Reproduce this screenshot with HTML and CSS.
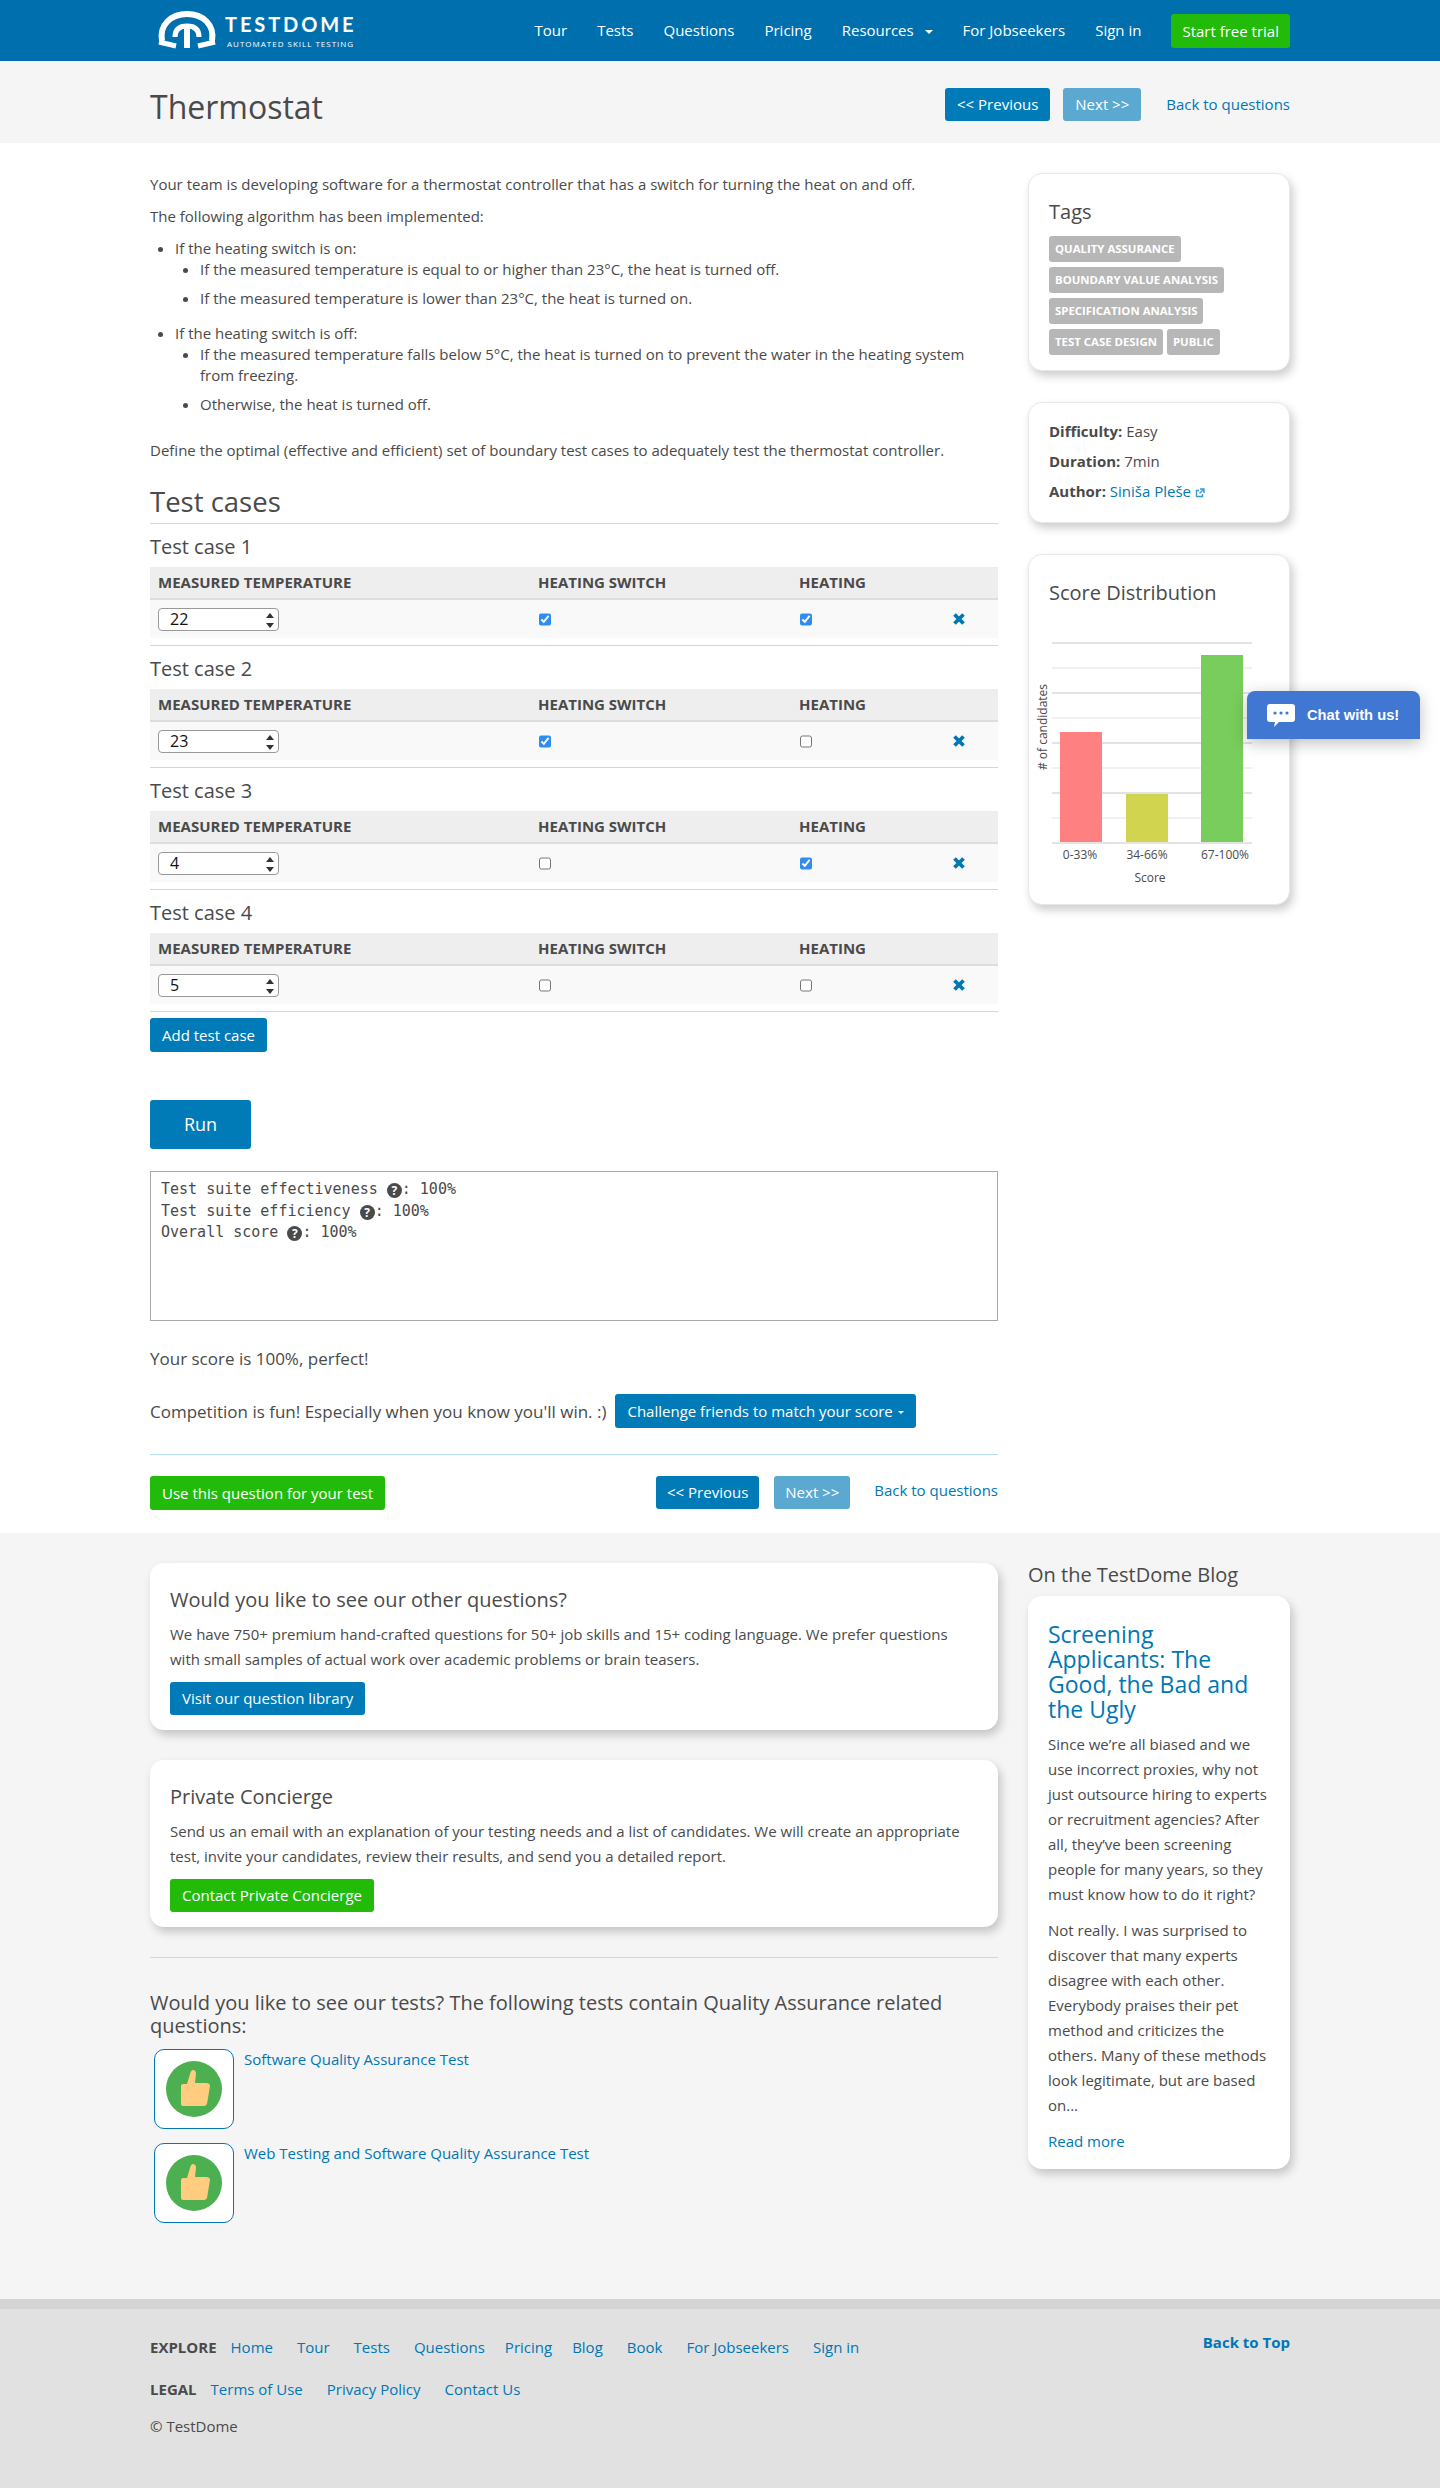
FILE: index.html
```html
<!DOCTYPE html>
<html lang="en">
<head>
    <meta charset="UTF-8">
    <meta name="viewport" content="width=device-width, initial-scale=1.0">
    <title>Thermostat - TestDome</title>
    <link rel="stylesheet" href="styles.css">
</head>
<body>

    <header class="topbar">
        <div class="container topbar-inner">
            <a class="logo" href="#">
                <svg class="logo-mark" viewBox="0 0 64 44" width="64" height="44">
                    <path d="M6 33C3 17 15 6 31 6C47 6 59 17 56 33" fill="none" stroke="#fff" stroke-width="6"/>
                    <path d="M3 34L20 38M59 34L42 38" fill="none" stroke="#fff" stroke-width="5"/>
                    <path d="M19 29C19 21 24 18 31 18C38 18 43 21 43 29" fill="none" stroke="#fff" stroke-width="5"/>
                    <path d="M28 20H34V40H28Z" fill="#fff"/>
                </svg>
                <span class="logo-text">
                    <span class="logo-name">TESTDOME</span>
                    <span class="logo-tag">AUTOMATED SKILL TESTING</span>
                </span>
            </a>
            <nav class="topnav">
                <a href="#">Tour</a>
                <a href="#">Tests</a>
                <a href="#">Questions</a>
                <a href="#">Pricing</a>
                <a href="#" class="has-caret">Resources <span class="caret"></span></a>
                <a href="#">For Jobseekers</a>
                <a href="#">Sign in</a>
                <a href="#" class="btn btn-green">Start free trial</a>
            </nav>
        </div>
    </header>

    <div class="titlebar">
        <div class="container titlebar-inner">
            <h1>Thermostat</h1>
            <div class="pager">
                <a href="#" class="btn btn-blue">&lt;&lt; Previous</a>
                <a href="#" class="btn btn-faded">Next &gt;&gt;</a>
                <a href="#" class="back-link">Back to questions</a>
            </div>
        </div>
    </div>

    <div class="container layout">
        <main class="question">
            <p>Your team is developing software for a thermostat controller that has a switch for turning the heat on and off.</p>
            <p>The following algorithm has been implemented:</p>
            <ul class="rules">
                <li>If the heating switch is on:
                    <ul>
                        <li>If the measured temperature is equal to or higher than 23°C, the heat is turned off.</li>
                        <li>If the measured temperature is lower than 23°C, the heat is turned on.</li>
                    </ul>
                </li>
                <li>If the heating switch is off:
                    <ul>
                        <li>If the measured temperature falls below 5°C, the heat is turned on to prevent the water in the heating system from freezing.</li>
                        <li>Otherwise, the heat is turned off.</li>
                    </ul>
                </li>
            </ul>
            <p>Define the optimal (effective and efficient) set of boundary test cases to adequately test the thermostat controller.</p>

            <h2>Test cases</h2>

            <section class="case">
                <h3>Test case 1</h3>
                <table>
                    <thead>
                        <tr><th class="col-temp">Measured temperature</th><th class="col-switch">Heating switch</th><th class="col-heat">Heating</th><th></th></tr>
                    </thead>
                    <tbody>
                        <tr>
                            <td><span class="spin"><input type="text" value="22"><span class="spin-arrows"></span></span></td>
                            <td><input type="checkbox" checked></td>
                            <td><input type="checkbox" checked></td>
                            <td><svg class="remove" viewBox="0 0 12 12" width="12" height="12"><path d="M1.5 1.5L10.5 10.5M10.5 1.5L1.5 10.5"/></svg></td>
                        </tr>
                    </tbody>
                </table>
            </section>

            <section class="case">
                <h3>Test case 2</h3>
                <table>
                    <thead>
                        <tr><th class="col-temp">Measured temperature</th><th class="col-switch">Heating switch</th><th class="col-heat">Heating</th><th></th></tr>
                    </thead>
                    <tbody>
                        <tr>
                            <td><span class="spin"><input type="text" value="23"><span class="spin-arrows"></span></span></td>
                            <td><input type="checkbox" checked></td>
                            <td><input type="checkbox"></td>
                            <td><svg class="remove" viewBox="0 0 12 12" width="12" height="12"><path d="M1.5 1.5L10.5 10.5M10.5 1.5L1.5 10.5"/></svg></td>
                        </tr>
                    </tbody>
                </table>
            </section>

            <section class="case">
                <h3>Test case 3</h3>
                <table>
                    <thead>
                        <tr><th class="col-temp">Measured temperature</th><th class="col-switch">Heating switch</th><th class="col-heat">Heating</th><th></th></tr>
                    </thead>
                    <tbody>
                        <tr>
                            <td><span class="spin"><input type="text" value="4"><span class="spin-arrows"></span></span></td>
                            <td><input type="checkbox"></td>
                            <td><input type="checkbox" checked></td>
                            <td><svg class="remove" viewBox="0 0 12 12" width="12" height="12"><path d="M1.5 1.5L10.5 10.5M10.5 1.5L1.5 10.5"/></svg></td>
                        </tr>
                    </tbody>
                </table>
            </section>

            <section class="case">
                <h3>Test case 4</h3>
                <table>
                    <thead>
                        <tr><th class="col-temp">Measured temperature</th><th class="col-switch">Heating switch</th><th class="col-heat">Heating</th><th></th></tr>
                    </thead>
                    <tbody>
                        <tr>
                            <td><span class="spin"><input type="text" value="5"><span class="spin-arrows"></span></span></td>
                            <td><input type="checkbox"></td>
                            <td><input type="checkbox"></td>
                            <td><svg class="remove" viewBox="0 0 12 12" width="12" height="12"><path d="M1.5 1.5L10.5 10.5M10.5 1.5L1.5 10.5"/></svg></td>
                        </tr>
                    </tbody>
                </table>
            </section>

            <a href="#" class="btn btn-blue add-case">Add test case</a>
            <a href="#" class="btn btn-blue btn-run">Run</a>

            <div class="output">
                <div>Test suite effectiveness <span class="help">?</span>: 100%</div>
                <div>Test suite efficiency <span class="help">?</span>: 100%</div>
                <div>Overall score <span class="help">?</span>: 100%</div>
            </div>

            <p class="score">Your score is 100%, perfect!</p>
            <div class="challenge">
                <span>Competition is fun! Especially when you know you'll win. :)</span>
                <a href="#" class="btn btn-blue">Challenge friends to match your score <span class="caret caret-small"></span></a>
            </div>

            <div class="actions">
                <a href="#" class="btn btn-green">Use this question for your test</a>
                <div class="pager pager-bottom">
                    <a href="#" class="btn btn-blue">&lt;&lt; Previous</a>
                    <a href="#" class="btn btn-faded">Next &gt;&gt;</a>
                    <a href="#" class="back-link">Back to questions</a>
                </div>
            </div>
        </main>

        <aside class="sidebar">
            <div class="card tags-card">
                <h4>Tags</h4>
                <div class="tags">
                    <span class="tag">Quality Assurance</span>
                    <span class="tag">Boundary Value Analysis</span>
                    <span class="tag">Specification Analysis</span>
                    <span class="tag">Test Case Design</span>
                    <span class="tag">Public</span>
                </div>
            </div>
            <div class="card info-card">
                <div><b>Difficulty:</b> Easy</div>
                <div><b>Duration:</b> 7min</div>
                <div><b>Author:</b> <a href="#">Siniša Pleše</a>
                    <svg class="ext" viewBox="0 0 10 10" width="10" height="10"><path d="M7.5 6V8.5H1.5V2.5H4M5 1H9V5M9 1L4.5 5.5" fill="none" stroke="#3a9ad0" stroke-width="1.4"/></svg>
                </div>
            </div>
            <div class="card chart-card">
                <h4>Score Distribution</h4>
                <svg class="chart" viewBox="0 0 260 260" width="260" height="260">
                    <g class="grid">
                        <path class="thick" d="M22 1H222"/>
                        <path d="M22 26H222"/>
                        <path class="thick" d="M22 51H222"/>
                        <path d="M22 76H222"/>
                        <path class="thick" d="M22 101H222"/>
                        <path d="M22 126H222"/>
                        <path class="thick" d="M22 151H222"/>
                        <path d="M22 176H222"/>
                        <path class="thick" d="M22 201H222"/>
                    </g>
                    <rect x="30" y="90" width="42" height="110" fill="#ff8080"/>
                    <rect x="96" y="152" width="42" height="48" fill="#d1d44f"/>
                    <rect x="171" y="13" width="42" height="187" fill="#79cd5c"/>
                    <text x="50" y="217" text-anchor="middle">0-33%</text>
                    <text x="117" y="217" text-anchor="middle">34-66%</text>
                    <text x="195" y="217" text-anchor="middle">67-100%</text>
                    <text x="120" y="240" text-anchor="middle">Score</text>
                    <text transform="translate(17 85) rotate(-90)" text-anchor="middle"># of candidates</text>
                </svg>
            </div>
        </aside>
    </div>

    <div class="more">
        <div class="container layout">
            <div class="more-main">
                <div class="promo">
                    <h3>Would you like to see our other questions?</h3>
                    <p>We have 750+ premium hand-crafted questions for 50+ job skills and 15+ coding language. We prefer questions with small samples of actual work over academic problems or brain teasers.</p>
                    <a href="#" class="btn btn-blue">Visit our question library</a>
                </div>
                <div class="promo">
                    <h3>Private Concierge</h3>
                    <p>Send us an email with an explanation of your testing needs and a list of candidates. We will create an appropriate test, invite your candidates, review their results, and send you a detailed report.</p>
                    <a href="#" class="btn btn-green">Contact Private Concierge</a>
                </div>
                <h3 class="related-title">Would you like to see our tests? The following tests contain Quality Assurance related questions:</h3>
                <div class="related">
                    <div class="thumb"><svg viewBox="0 0 56 56" width="56" height="56"><circle cx="28" cy="28" r="28" fill="#4caf50"/><path d="M15 25q0-2 2-2h4l3-10q1-4 3-4q3 0 3 4l-1 9h11q4 0 4 3l-3 18q-1 2-3 2H17q-2 0-2-2z" fill="#ffcc80"/></svg></div>
                    <a href="#">Software Quality Assurance Test</a>
                </div>
                <div class="related">
                    <div class="thumb"><svg viewBox="0 0 56 56" width="56" height="56"><circle cx="28" cy="28" r="28" fill="#4caf50"/><path d="M15 25q0-2 2-2h4l3-10q1-4 3-4q3 0 3 4l-1 9h11q4 0 4 3l-3 18q-1 2-3 2H17q-2 0-2-2z" fill="#ffcc80"/></svg></div>
                    <a href="#">Web Testing and Software Quality Assurance Test</a>
                </div>
            </div>
            <aside class="sidebar">
                <h3 class="blog-heading">On the TestDome Blog</h3>
                <div class="blog">
                    <a href="#" class="blog-title">Screening Applicants: The Good, the Bad and the Ugly</a>
                    <p>Since we’re all biased and we use incorrect proxies, why not just outsource hiring to experts or recruitment agencies? After all, they’ve been screening people for many years, so they must know how to do it right?</p>
                    <p>Not really. I was surprised to discover that many experts disagree with each other. Everybody praises their pet method and criticizes the others. Many of these methods look legitimate, but are based on...</p>
                    <a href="#" class="read-more">Read more</a>
                </div>
            </aside>
        </div>
    </div>

    <footer class="footer">
        <div class="container footer-inner">
            <div class="footer-links">
                <div class="footer-row">
                    <b>EXPLORE</b>
                    <a href="#">Home</a>
                    <a href="#">Tour</a>
                    <a href="#">Tests</a>
                    <a href="#">Questions</a>
                    <a href="#" class="tight">Pricing</a>
                    <a href="#" class="tight">Blog</a>
                    <a href="#">Book</a>
                    <a href="#">For Jobseekers</a>
                    <a href="#">Sign in</a>
                </div>
                <div class="footer-row">
                    <b>LEGAL</b>
                    <a href="#">Terms of Use</a>
                    <a href="#">Privacy Policy</a>
                    <a href="#">Contact Us</a>
                </div>
                <div class="copyright">© TestDome</div>
            </div>
            <a href="#" class="to-top">Back to Top</a>
        </div>
    </footer>

    <div class="chat">
        <svg viewBox="0 0 28 23" width="28" height="23"><path d="M3 0H25Q28 0 28 3V15Q28 18 25 18H12L7 23L8 18H3Q0 18 0 15V3Q0 0 3 0Z" fill="#fff"/><circle cx="8" cy="9" r="1.6" fill="#3f77d3"/><circle cx="14" cy="9" r="1.6" fill="#3f77d3"/><circle cx="20" cy="9" r="1.6" fill="#3f77d3"/></svg>
        <span>Chat with us!</span>
    </div>

</body>
</html>
```

FILE: styles.css
```css
* {
    box-sizing: border-box;
}
html {
    background-color: #e1e1e1; /* same as the footer, for the end of the page */
}
body {
    margin: 0;
    position: relative;
    font-family: "Open Sans", sans-serif;
    font-size: 15px;
    line-height: 21px;
    color: #4a4a4a;
    background-color: #fff;
}
a {
    color: #0077b5;
    text-decoration: none;
}
.container {
    width: 1140px;
    margin: 0 auto;
}

/* Buttons */
.btn {
    display: inline-block;
    height: 34px;
    line-height: 34px;
    padding: 0 12px;
    border-radius: 3px;
    color: #fff;
    font-size: 15px;
    white-space: nowrap;
}
.btn-blue {
    background-color: #007bb8;
}
.btn-faded {
    background-color: #5ba8d1;
}
.btn-green {
    background-color: #22bb0a;
}
.caret {
    display: inline-block;
    margin-left: 7px;
    vertical-align: middle;
    border-top: 4px solid #fff;
    border-left: 4px solid transparent;
    border-right: 4px solid transparent;
}
.caret-small {
    margin-left: 0;
    border-top-width: 3px;
    border-left-width: 3px;
    border-right-width: 3px;
}

/* Top bar */
.topbar {
    height: 61px;
    background-color: #006fae;
}
.topbar-inner {
    height: 61px;
    display: flex;
    align-items: center;
    justify-content: space-between;
}
.logo {
    display: flex;
    align-items: flex-start;
    height: 61px;
    padding: 8px 0 0 6px;
    color: #fff;
}
.logo-text {
    display: flex;
    flex-direction: column;
    margin: 4px 0 0 5px;
}
.logo-name {
    font-family: Lato, sans-serif;
    font-weight: 700;
    font-size: 20px;
    line-height: 24px;
    letter-spacing: 2.9px;
}
.logo-tag {
    font-size: 8px;
    line-height: 10px;
    letter-spacing: 1px;
    margin: 3px 0 0 2px;
}
.topnav {
    display: flex;
    align-items: center;
    gap: 30px;
}
.topnav a {
    color: #fff;
}
.topnav .btn {
    padding: 0 11px;
}

/* Title bar */
.titlebar {
    height: 82px;
    background-color: #f5f5f5;
}
.titlebar-inner {
    display: flex;
    align-items: flex-start;
    justify-content: space-between;
    padding-top: 27px;
}
h1 {
    margin: -1px 0 0;
    font-size: 32px;
    font-weight: 400;
    line-height: 40px;
}
.pager {
    display: flex;
    align-items: flex-start;
}
.pager .btn {
    height: 33px;
    line-height: 33px;
}
.pager .btn-faded {
    margin-left: 13px;
}
.back-link {
    margin: 1px 0 0 25px;
    line-height: 30px;
}

/* Main column */
.layout {
    display: flex;
    justify-content: space-between;
}
.question {
    width: 848px;
    padding: 31px 0 23px;
}
.question p {
    margin: 0 0 11px;
}
.rules {
    margin: 0 0 11px;
    padding: 0 0 0 25px;
}
.rules > li {
    padding-bottom: 6px;
}
.rules ul {
    margin: 0;
    padding: 0 0 0 25px;
    list-style-type: disc;
}
.rules ul li {
    margin-bottom: 8px;
}
h2 {
    margin: 26px 0 0;
    padding-bottom: 6px;
    border-bottom: 1px solid #b3e0f5;
    font-size: 27.5px;
    font-weight: 400;
    line-height: 30px;
}
.case {
    padding: 11px 0 7px;
    border-bottom: 1px solid #b3e0f5;
}
.case h3 {
    margin: 0 0 8px;
    font-size: 20px;
    font-weight: 400;
    line-height: 24px;
}
table {
    width: 100%;
    border-collapse: collapse;
    table-layout: fixed;
}
th {
    height: 32px;
    padding: 0 8px;
    background-color: #eee;
    border-bottom: 2px solid #ddd;
    font-size: 15px;
    font-weight: 700;
    text-align: left;
    text-transform: uppercase;
}
td {
    height: 39px;
    padding: 0 8px;
    background-color: #f9f9f9;
    vertical-align: middle;
}
.col-temp {
    width: 380px;
}
.col-switch {
    width: 261px;
}
.col-heat {
    width: 149px;
}
td input[type="checkbox"] {
    display: block;
    width: 12px;
    height: 13px;
    margin: 0 0 0 1px;
    accent-color: #2f8cf0;
}
.spin {
    position: relative;
    display: block;
    width: 121px;
    height: 23px;
}
.spin input {
    display: block;
    width: 121px;
    height: 23px;
    padding: 0 0 0 11px;
    border: 1px solid #999;
    border-radius: 4px;
    background-color: #fff;
    color: #111;
    font-family: "Open Sans", sans-serif;
    font-size: 16px;
}
.spin-arrows {
    position: absolute;
    top: 5px;
    right: 5px;
    width: 8px;
    height: 15px;
}
.spin-arrows::before,
.spin-arrows::after {
    content: "";
    position: absolute;
    left: 0;
    border-left: 4px solid transparent;
    border-right: 4px solid transparent;
}
.spin-arrows::before {
    top: 0;
    border-bottom: 5px solid #333;
}
.spin-arrows::after {
    bottom: 0;
    border-top: 5px solid #333;
}
.remove {
    display: block;
    margin-left: 5px;
}
.remove path {
    fill: none;
    stroke: #0077b5;
    stroke-width: 3.8;
}
.add-case {
    display: block;
    width: 117px;
    margin-top: 6px;
}
.btn-run {
    display: block;
    width: 101px;
    height: 49px;
    margin-top: 48px;
    line-height: 49px;
    padding: 0;
    font-size: 18px;
    text-align: center;
}
.output {
    height: 150px;
    margin-top: 22px;
    padding: 7px 10px;
    border: 1px solid #aaa;
    font-family: "DejaVu Sans Mono", monospace;
    font-size: 15px;
    line-height: 21.5px;
}
.help {
    display: inline-block;
    width: 15px;
    height: 15px;
    border-radius: 50%;
    background-color: #4a4a4a;
    color: #fff;
    font-family: "Open Sans", sans-serif;
    font-size: 12px;
    font-weight: 700;
    line-height: 15px;
    text-align: center;
    vertical-align: -1px;
}
.question .score {
    margin: 26px 0 0;
    font-size: 17px;
    line-height: 24px;
}
.challenge {
    display: flex;
    align-items: center;
    gap: 9px;
    margin-top: 23px;
    font-size: 17px;
}
.challenge .caret-small {
    margin-left: 1px;
}
.actions {
    display: flex;
    justify-content: space-between;
    align-items: flex-start;
    margin-top: 26px;
    padding-top: 21px;
    border-top: 1px solid #b3e0f5;
}
.pager-bottom .btn {
    padding: 0 11px;
}
.pager-bottom .btn-faded {
    margin-left: 15px;
}
.pager-bottom .back-link {
    margin: -1px 0 0 24px;
}

/* Sidebar */
.sidebar {
    width: 262px;
}
.card {
    background-color: #fff;
    border: 1px solid #e8e8e8;
    border-radius: 14px;
    box-shadow: 3px 5px 10px rgba(0, 0, 0, .2);
    padding: 0 20px;
    margin-top: 31px;
}
.tags-card {
    height: 198px;
    margin-top: 30px;
    padding-top: 24px;
}
h4 {
    margin: 0;
    font-size: 20px;
    font-weight: 400;
    line-height: 28px;
}
.tags {
    display: flex;
    flex-wrap: wrap;
    gap: 5px 4px;
    margin-top: 10px;
}
.tag {
    height: 26px;
    padding: 0 6px;
    border-radius: 3px;
    background-color: #b7b7b7;
    color: #fff;
    font-size: 11.4px;
    font-weight: 700;
    line-height: 26px;
    text-transform: uppercase;
}
.info-card {
    height: 121px;
    padding-top: 13px;
}
.info-card div {
    height: 30px;
    line-height: 30px;
}
.ext {
    vertical-align: -1px;
}
.chart-card {
    height: 351px;
    padding-top: 24px;
}
.chart {
    display: block;
    margin: 35px 0 0 -19px;
}
.grid path {
    stroke: #e3e3e3;
    stroke-width: 1;
}
.grid .thick {
    stroke-width: 2;
}
.chart text {
    font-family: "Open Sans", sans-serif;
    font-size: 12px;
    fill: #4a4a4a;
}

/* Lower grey part */
.more {
    height: 766px;
    background-color: #f5f5f5;
}
.more-main {
    width: 848px;
    padding-top: 30px;
}
.promo {
    height: 167px;
    margin-bottom: 30px;
    padding: 24px 20px 0;
    background-color: #fff;
    border-radius: 14px;
    box-shadow: 3px 5px 10px rgba(0, 0, 0, .2);
}
.promo h3 {
    margin: 0;
    font-size: 20px;
    font-weight: 400;
    line-height: 26px;
}
.promo p {
    margin: 9px 0 10px;
    line-height: 25px;
}
.promo .btn {
    height: 33px;
    line-height: 33px;
}
.related-title {
    margin: 0 0 12px;
    padding-top: 33px;
    border-top: 1px solid #b3e0f5;
    font-size: 20px;
    font-weight: 400;
    line-height: 23px;
}
.related {
    display: flex;
    gap: 10px;
    margin: 0 0 14px 4px;
}
.thumb {
    display: flex;
    align-items: center;
    justify-content: center;
    width: 80px;
    height: 80px;
    background-color: #fff;
    border: 1px solid #0077b5;
    border-radius: 10px;
}
.blog-heading {
    margin: 30px 0 9px;
    font-size: 20px;
    font-weight: 400;
    line-height: 24px;
}
.blog {
    height: 573px;
    padding: 26px 20px 0;
    background-color: #fff;
    border-radius: 14px;
    box-shadow: 3px 5px 10px rgba(0, 0, 0, .2);
}
.blog-title {
    display: block;
    font-size: 23px;
    line-height: 25px;
}
.blog p {
    margin: 10px 0 11px;
    line-height: 25px;
}
.read-more {
    display: block;
    line-height: 25px;
}

/* Footer */
.footer {
    height: 186px;
    background-color: #e1e1e1;
    border-top: 10px solid #d4d4d4;
}
.footer-inner {
    display: flex;
    justify-content: space-between;
    padding-top: 28px;
}
.footer-row {
    display: flex;
    gap: 24px;
    margin-bottom: 21px;
}
.footer-row b {
    margin-right: -10px;
}
.footer-row .tight {
    margin-left: -4px;
}
.copyright {
    margin-top: -5px;
}
.to-top {
    font-weight: 700;
    margin-top: -5px;
}

/* Chat widget, floats over the page */
.chat {
    position: absolute;
    top: 691px;
    left: 1247px;
    display: flex;
    align-items: center;
    gap: 12px;
    width: 173px;
    height: 48px;
    padding-left: 20px;
    background-color: #3f77d3;
    border-radius: 8px 8px 0 0;
    box-shadow: 0 4px 16px rgba(0, 0, 0, .25);
    color: #fff;
    font-family: "Liberation Sans", sans-serif;
    font-size: 14.7px;
    font-weight: 700;
}
```
